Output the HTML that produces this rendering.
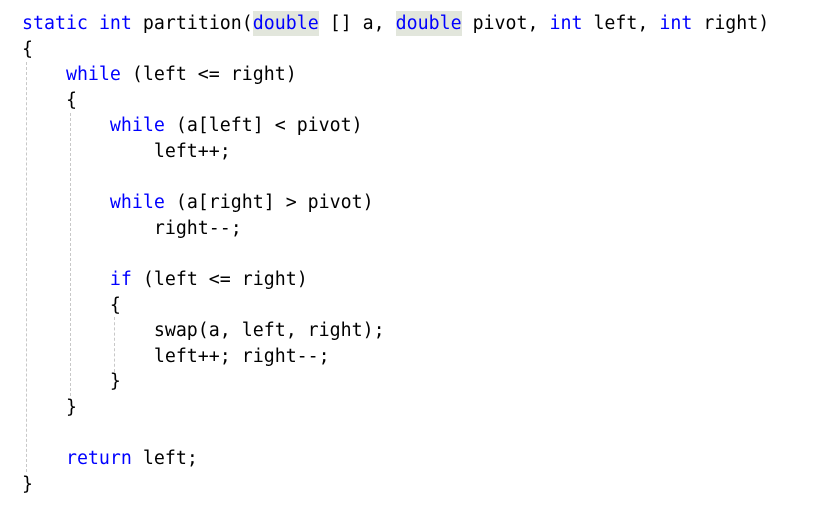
<!DOCTYPE html>
<html><head><meta charset="utf-8"><style>
html,body{margin:0;padding:0;background:#fff;width:837px;height:505px;overflow:hidden;position:relative}
pre{position:absolute;left:22px;top:11px;margin:0;font-family:"DejaVu Sans Mono","Liberation Mono",monospace;font-size:18.25px;line-height:25.6px;color:#000}
.k{color:#0000ff}
.h{background:#e2e6dc;padding:2px 0}
.g{position:absolute;width:0;border-left:1px dashed #c8c8c8}
</style></head><body>
<div class="g" style="left:26px;top:62px;height:410px"></div>
<div class="g" style="left:70px;top:113px;height:283px"></div>
<div class="g" style="left:114px;top:317px;height:55px"></div>
<pre><span class="k">static</span> <span class="k">int</span> partition(<span class="k h">double</span> [] a, <span class="k h">double</span> pivot, <span class="k">int</span> left, <span class="k">int</span> right)
{
    <span class="k">while</span> (left &lt;= right)
    {
        <span class="k">while</span> (a[left] &lt; pivot)
            left++;

        <span class="k">while</span> (a[right] &gt; pivot)
            right--;

        <span class="k">if</span> (left &lt;= right)
        {
            swap(a, left, right);
            left++; right--;
        }
    }

    <span class="k">return</span> left;
}</pre>
</body></html>
